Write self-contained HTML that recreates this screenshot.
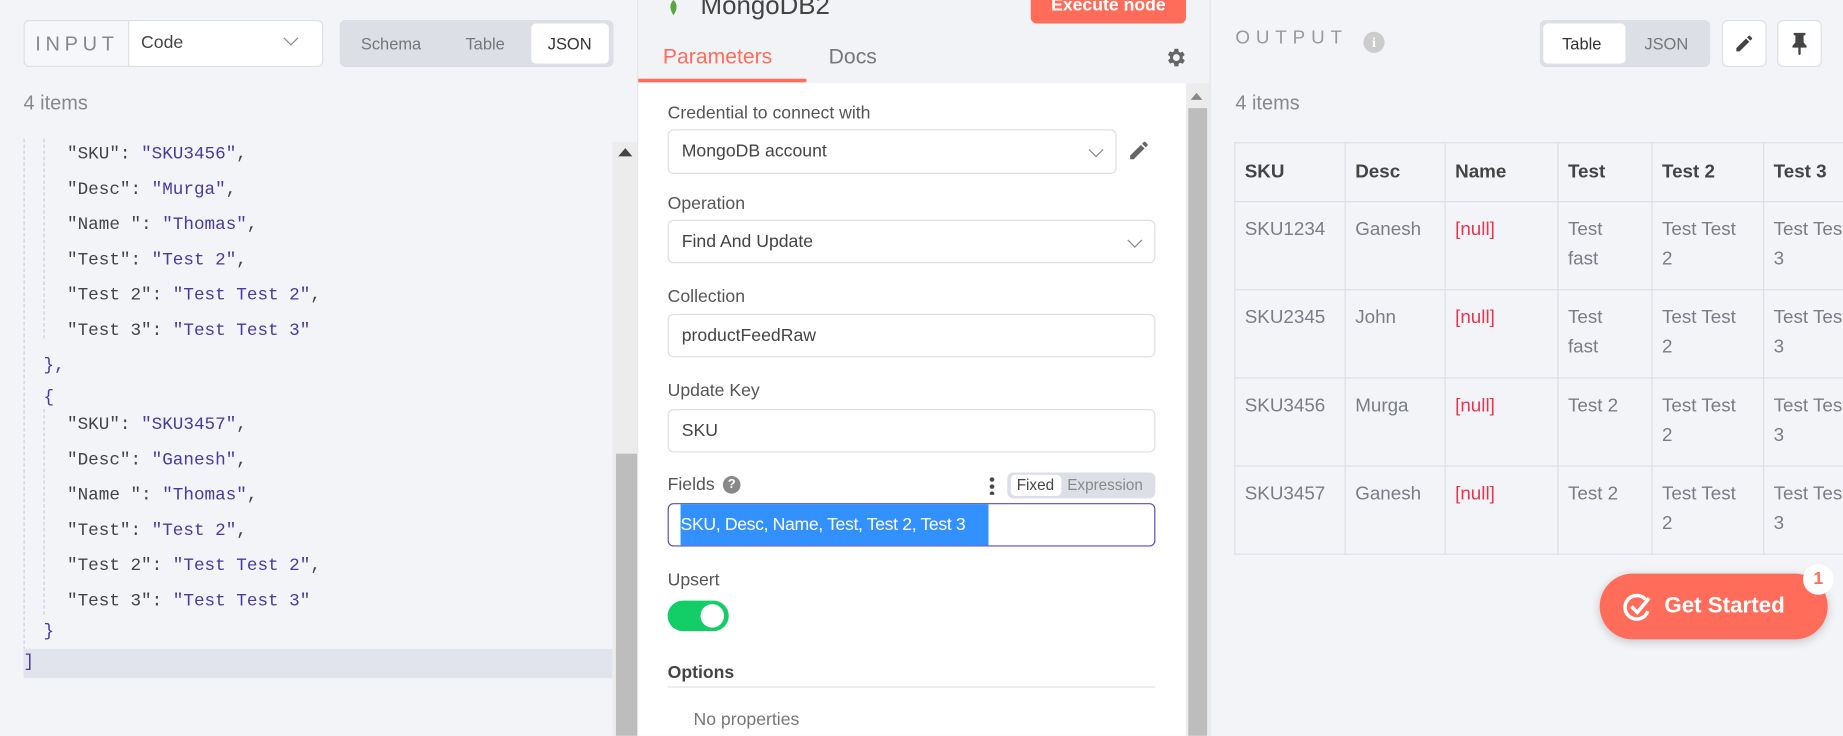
<!DOCTYPE html>
<html><head><meta charset="utf-8"><style>
*{box-sizing:border-box;margin:0;padding:0}
html,body{width:1843px;height:736px;overflow:hidden;background:#f3f4f8}
#w{width:1568px;height:626px;position:relative;transform:scale(1.17538);transform-origin:0 0;font-family:"Liberation Sans",sans-serif;color:#555}
.a{position:absolute}
.mono{font-family:"Liberation Mono",monospace;font-size:15px;color:#444}
.s{color:#4a3aa0}
.lbl{font-size:15px;color:#555}
.inp{position:absolute;left:568px;width:415px;height:37px;border:1px solid #dcdfe6;border-radius:5px;background:#fff;font-size:15px;color:#444;padding:9px 11px}
.chev{position:absolute;right:12px;top:12px;width:9px;height:9px;border-right:1.4px solid #888;border-bottom:1.4px solid #888;transform:rotate(45deg)}
table{border-collapse:collapse;position:absolute;left:1050px;top:121px;font-size:16px;table-layout:fixed;width:560px}
td,th{border:1px solid #dcdfe6;vertical-align:top;text-align:left;padding:11px 8px 13px 8px;color:#7a7d85;line-height:25px;font-weight:normal;white-space:nowrap;overflow:hidden}
th{font-weight:bold;color:#444;padding:12px 8px;height:49px}
.n{color:#e8344e}
</style></head><body><div id="w">
<!-- left panel -->
<div class="a" style="left:20px;top:17px;width:255px;height:40px;border:1px solid #dcdfe6;border-radius:5px;background:#fff"></div>
<div class="a" style="left:20px;top:17px;width:90px;height:40px;border:1px solid #dcdfe6;border-radius:5px 0 0 5px;background:#f6f7fa;font-size:17px;letter-spacing:4px;color:#888;padding:10px 9px">INPUT</div>
<div class="a" style="left:120px;top:28px;font-size:15px;color:#444">Code</div>
<div class="a" style="left:244px;top:28px;width:0;height:0"><div class="chev" style="right:-8px;top:0"></div></div>
<div class="a" style="left:289px;top:17px;width:233px;height:40px;background:#dcdfe6;border-radius:5px"></div>
<div class="a" style="left:452px;top:20px;width:66px;height:34px;background:#fff;border-radius:4px"></div>
<div class="a" style="left:307px;top:29px;font-size:14px;color:#777">Schema</div>
<div class="a" style="left:396px;top:29px;font-size:14px;color:#777">Table</div>
<div class="a" style="left:466px;top:29px;font-size:14px;color:#333">JSON</div>
<div class="a" style="left:20px;top:78px;font-size:17px;color:#888">4 items</div>
<div class="a" style="left:20px;top:118px;width:1px;height:440px;border-left:1px dashed #ccd"></div>
<div class="a" style="left:37px;top:118px;width:1px;height:170px;border-left:1px dashed #ccd"></div>
<div class="a" style="left:37px;top:348px;width:1px;height:175px;border-left:1px dashed #ccd"></div>
<div class="a" style="left:20px;top:552px;width:501px;height:25px;background:#e2e4ed"></div>
<div class="a mono" style="left:57px;top:117px;line-height:30px;white-space:pre">"SKU": <span class="s">"SKU3456"</span>,
"Desc": <span class="s">"Murga"</span>,
"Name ": <span class="s">"Thomas"</span>,
"Test": <span class="s">"Test 2"</span>,
"Test 2": <span class="s">"Test Test 2"</span>,
"Test 3": <span class="s">"Test Test 3"</span></div>
<div class="a mono s" style="left:37px;top:298px;line-height:27px;white-space:pre">},
{</div>
<div class="a mono" style="left:57px;top:347px;line-height:30px;white-space:pre">"SKU": <span class="s">"SKU3457"</span>,
"Desc": <span class="s">"Ganesh"</span>,
"Name ": <span class="s">"Thomas"</span>,
"Test": <span class="s">"Test 2"</span>,
"Test 2": <span class="s">"Test Test 2"</span>,
"Test 3": <span class="s">"Test Test 3"</span></div>
<div class="a mono s" style="left:37px;top:529px">}</div>
<div class="a mono s" style="left:20px;top:555px">]</div>
<!-- left scrollbar -->
<div class="a" style="left:521px;top:121px;width:22px;height:505px;background:#ececec"></div>
<div class="a" style="left:524px;top:386px;width:18px;height:240px;background:#bdbdbd"></div>
<div class="a" style="left:526px;top:126px;width:0;height:0;border-left:6px solid transparent;border-right:6px solid transparent;border-bottom:7px solid #444"></div>
<!-- middle panel -->
<div class="a" style="left:542px;top:0;width:488px;height:626px;background:#f2f3f7;border-left:1px solid #e3e5ec;border-right:1px solid #e3e5ec"></div>
<div class="a" style="left:543px;top:71px;width:466px;height:555px;background:#fff"></div>
<svg class="a" style="left:568px;top:0" width="10" height="14"><path d="M5 0 C8 3 9 7 5 13 C1 7 2 3 5 0Z" fill="#5aa545"/></svg>
<div class="a" style="left:596px;top:-8px;font-size:22px;color:#444">MongoDB2</div>
<div class="a" style="left:877px;top:-6px;width:132px;height:26px;background:#ff6d5a;border-radius:5px;color:#fff;font-weight:bold;font-size:15px;text-align:center;line-height:22px">Execute node</div>
<div class="a" style="left:564px;top:38px;font-size:18px;color:#ff6d5a">Parameters</div>
<div class="a" style="left:705px;top:38px;font-size:18px;color:#777">Docs</div>
<div class="a" style="left:543px;top:67px;width:143px;height:3px;background:#ff6d5a"></div>
<svg class="a" style="left:990px;top:39px" width="20" height="20" viewBox="0 0 24 24"><path fill="#666" d="M19.4 13a7.5 7.5 0 0 0 0-2l2.1-1.6-2-3.5-2.5 1a7.6 7.6 0 0 0-1.7-1L15 3h-4l-.4 2.7a7.6 7.6 0 0 0-1.7 1l-2.5-1-2 3.5L6.6 11a7.5 7.5 0 0 0 0 2l-2.1 1.6 2 3.5 2.5-1a7.6 7.6 0 0 0 1.7 1L11 21h4l.4-2.7a7.6 7.6 0 0 0 1.7-1l2.5 1 2-3.5zM13 15.5a3.5 3.5 0 1 1 0-7 3.5 3.5 0 0 1 0 7z"/></svg>
<div class="a" style="left:1009px;top:71px;width:20px;height:555px;background:#ececec"></div>
<div class="a" style="left:1011px;top:92px;width:16px;height:534px;background:#bdbdbd"></div>
<div class="a" style="left:1013px;top:79px;width:0;height:0;border-left:5px solid transparent;border-right:5px solid transparent;border-bottom:6px solid #888"></div>
<div class="a lbl" style="left:568px;top:88px">Credential to connect with</div>
<div class="inp" style="top:110px;width:382px;height:38px">MongoDB account<div class="chev"></div></div>
<svg class="a" style="left:959px;top:118px" width="20" height="20" viewBox="0 0 24 24"><path fill="#666" d="M3 17.3V21h3.7l11-11-3.7-3.7zM20.7 7a1 1 0 0 0 0-1.4l-2.3-2.3a1 1 0 0 0-1.4 0l-1.8 1.8 3.7 3.7z"/></svg>
<div class="a lbl" style="left:568px;top:165px">Operation</div>
<div class="inp" style="top:187px">Find And Update<div class="chev"></div></div>
<div class="a lbl" style="left:568px;top:244px">Collection</div>
<div class="inp" style="top:267px">productFeedRaw</div>
<div class="a lbl" style="left:568px;top:324px">Update Key</div>
<div class="inp" style="top:348px">SKU</div>
<div class="a lbl" style="left:568px;top:404px">Fields</div>
<div class="a" style="left:615px;top:405px;width:15px;height:15px;border-radius:50%;background:#888;color:#fff;font-size:11px;font-weight:bold;text-align:center;line-height:15px">?</div>
<div class="a" style="left:842px;top:405px;width:4px;height:16px;background:radial-gradient(circle,#444 1.8px,transparent 2px) 0 0/4px 6px"></div>
<div class="a" style="left:857px;top:402px;width:126px;height:22px;background:#dcdfe6;border-radius:5px"></div>
<div class="a" style="left:860px;top:404px;width:43px;height:18px;background:#fff;border-radius:4px"></div>
<div class="a" style="left:865px;top:405px;font-size:13px;color:#444">Fixed</div>
<div class="a" style="left:908px;top:405px;font-size:13px;color:#888">Expression</div>
<div class="a" style="left:568px;top:428px;width:415px;height:37px;border:1px solid #5b4bbf;border-radius:5px;background:#fff"></div>
<div class="a" style="left:579px;top:429px;width:262px;height:35px;background:#3390ff;color:#fff;font-size:15px;line-height:35px;white-space:nowrap;letter-spacing:-0.3px">SKU, Desc, Name, Test, Test 2, Test 3</div>
<div class="a lbl" style="left:568px;top:485px">Upsert</div>
<div class="a" style="left:568px;top:511px;width:52px;height:26px;border-radius:13px;background:#13ce66"></div>
<div class="a" style="left:596px;top:514px;width:20px;height:20px;border-radius:50%;background:#fff"></div>
<div class="a" style="left:568px;top:564px;font-size:15px;font-weight:bold;color:#444">Options</div>
<div class="a" style="left:568px;top:584px;width:415px;height:1px;background:#dcdfe6"></div>
<div class="a" style="left:590px;top:604px;font-size:15px;color:#777">No properties</div>
<!-- right panel -->
<div class="a" style="left:1051px;top:24px;font-size:16px;letter-spacing:5px;color:#999">OUTPUT</div>
<div class="a" style="left:1160px;top:27px;width:18px;height:18px;border-radius:50%;background:#ccc;color:#fff;font-size:12px;font-weight:bold;text-align:center;line-height:18px;font-family:'Liberation Serif',serif">i</div>
<div class="a" style="left:1310px;top:17px;width:145px;height:40px;background:#dcdfe6;border-radius:5px"></div>
<div class="a" style="left:1313px;top:20px;width:70px;height:34px;background:#fff;border-radius:4px"></div>
<div class="a" style="left:1329px;top:29px;font-size:14px;color:#333">Table</div>
<div class="a" style="left:1399px;top:29px;font-size:14px;color:#777">JSON</div>
<div class="a" style="left:1465px;top:17px;width:38px;height:40px;border:1px solid #dcdfe6;border-radius:5px;background:#fff"></div>
<svg class="a" style="left:1475px;top:28px" width="18" height="18" viewBox="0 0 24 24"><path fill="#444" d="M3 17.3V21h3.7l11-11-3.7-3.7zM20.7 7a1 1 0 0 0 0-1.4l-2.3-2.3a1 1 0 0 0-1.4 0l-1.8 1.8 3.7 3.7z"/></svg>
<div class="a" style="left:1512px;top:17px;width:38px;height:40px;border:1px solid #dcdfe6;border-radius:5px;background:#fff"></div>
<svg class="a" style="left:1524px;top:27px" width="14" height="20" viewBox="0 0 14 20"><path fill="#444" d="M2 1h10v2h-1.5v6l2.5 3v1.5H8V19l-1 1-1-1v-5.5H1V12l2.5-3V3H2z"/></svg>
<div class="a" style="left:1051px;top:78px;font-size:17px;color:#888">4 items</div>
<table>
<colgroup><col style="width:94px"><col style="width:85px"><col style="width:96px"><col style="width:80px"><col style="width:95px"><col style="width:110px"></colgroup>
<tr><th>SKU</th><th>Desc</th><th>Name</th><th>Test</th><th>Test 2</th><th>Test 3</th></tr>
<tr><td>SKU1234</td><td>Ganesh</td><td class="n">[null]</td><td>Test<br>fast</td><td>Test Test<br>2</td><td>Test Test<br>3</td></tr>
<tr><td>SKU2345</td><td>John</td><td class="n">[null]</td><td>Test<br>fast</td><td>Test Test<br>2</td><td>Test Test<br>3</td></tr>
<tr><td>SKU3456</td><td>Murga</td><td class="n">[null]</td><td>Test 2</td><td>Test Test<br>2</td><td>Test Test<br>3</td></tr>
<tr><td>SKU3457</td><td>Ganesh</td><td class="n">[null]</td><td>Test 2</td><td>Test Test<br>2</td><td>Test Test<br>3</td></tr>
</table>
<div class="a" style="left:1361px;top:488px;width:194px;height:56px;border-radius:28px;background:#ff6d5a;box-shadow:0 2px 8px rgba(0,0,0,.2)"></div>
<svg class="a" style="left:1380px;top:504px" width="26" height="26" viewBox="0 0 26 26"><path d="M20 6A10 10 0 1 0 22 16" fill="none" stroke="#fff" stroke-width="3"/><path d="M8 12l5 5 10-12" fill="none" stroke="#fff" stroke-width="3"/></svg>
<div class="a" style="left:1416px;top:505px;font-size:19px;font-weight:bold;color:#fff">Get Started</div>
<div class="a" style="left:1534px;top:480px;width:26px;height:26px;border-radius:50%;background:#fff;color:#ff6d5a;font-weight:bold;font-size:15px;text-align:center;line-height:26px">1</div>
</div></body></html>
